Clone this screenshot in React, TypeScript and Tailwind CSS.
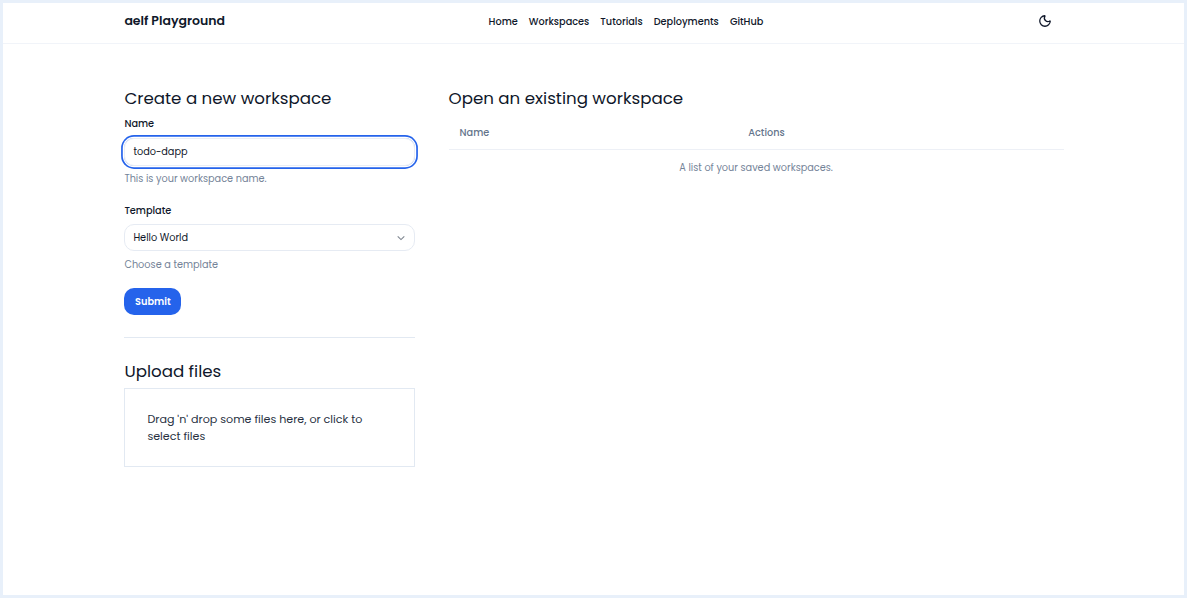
import { Moon } from "lucide-react";

const links = ["Home", "Workspaces", "Tutorials", "Deployments", "GitHub"];

export default function App() {
  return (
    <div className="h-[598px] w-[1187px] overflow-hidden border-3 border-[#e8f0fa] bg-white font-['Poppins','Inter',sans-serif] text-[9.72px] leading-[14px] text-[#0f172a]">
      <header className="flex h-[41px] items-center border-b border-[#f1f4f9] pl-[121.4px] pb-[4px]">
        <div className="w-[364.2px] text-[12.5px] leading-5 font-semibold">aelf Playground</div>
        <nav className="flex w-[549.4px] gap-[11.1px] pt-px font-medium">
          {links.map((link) => (
            <a key={link} href="#">{link}</a>
          ))}
        </nav>
        <Moon size={14} strokeWidth={2.2} />
      </header>
      <main className="flex gap-[33.1px] pl-[121.4px] pt-[42px]">
        <section className="w-[291.1px]">
          <h1 className="text-[16.67px] leading-6">Create a new workspace</h1>
          <form onSubmit={(e) => e.preventDefault()}>
            <label className="mt-[7px] block font-medium">Name</label>
            <input
              className="mt-[6.5px] block h-[28px] w-full rounded-[10px] border border-[#e9edf5] px-2 shadow-[0_0_0_1.2px_#fff,0_0_0_2.9px_#2563eb] outline-none"
              defaultValue="todo-dapp"
            />
            <p className="mt-[6.5px] text-[#748398]">This is your workspace name.</p>
            <label className="mt-[18px] block font-medium">Template</label>
            <button type="button" className="mt-[6px] flex h-[27px] w-full items-center justify-between rounded-[10px] border border-[#e6ebf3] pr-[8.5px] pl-2">
              <span>Hello World</span>
              <svg width="10" height="10" viewBox="0 0 10 10" fill="none" stroke="#7e858f" strokeWidth="1.1">
                <path d="M1.7 3.4 5 6.6l3.3-3.2" />
              </svg>
            </button>
            <p className="mt-[7px] text-[#748398]">Choose a template</p>
            <button className="mt-[16px] h-[27px] w-[57px] rounded-[10px] bg-[#2563eb] font-semibold text-white">Submit</button>
          </form>
          <hr className="mt-[22px] border-[#e2e9f2]" />
          <h2 className="mt-[21px] text-[16.67px] leading-6">Upload files</h2>
          <div className="mt-[5px] h-[79px] border border-[#e2e9f2] px-[22px] pt-[22px] text-[11.11px] leading-[16.67px] text-[#27303f]">
            Drag 'n' drop some files here, or click to<br />select files
          </div>
        </section>
        <section className="w-[615px]">
          <h1 className="text-[16.67px] leading-6">Open an existing workspace</h1>
          <div className="mt-[7px] flex h-[33px] border-b border-[#edf0f6] pl-[11px] pt-[9px] font-medium text-[#64748b]">
            <div className="w-[288.6px]">Name</div>
            <div>Actions</div>
          </div>
          <p className="mt-[11px] text-center text-[#748398]">A list of your saved workspaces.</p>
        </section>
      </main>
    </div>
  );
}
